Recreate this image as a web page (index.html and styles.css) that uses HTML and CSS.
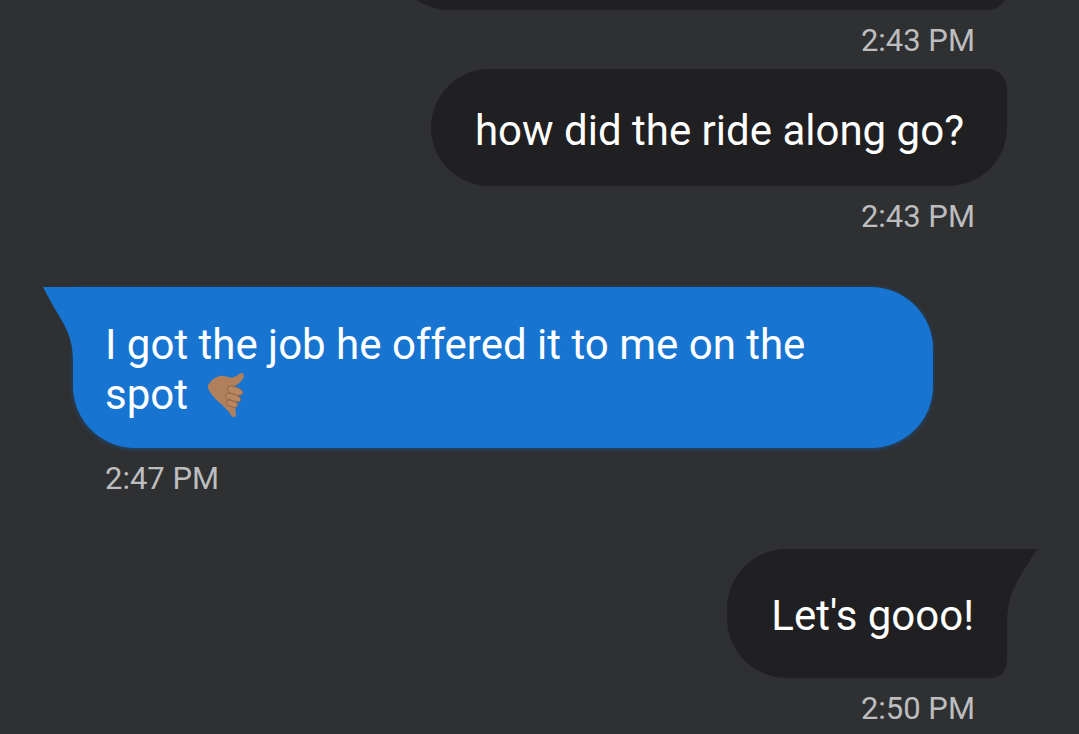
FILE: index.html
```
<!DOCTYPE html>
<html lang="en">
<head>
  <meta charset="UTF-8">
  <meta name="viewport" content="width=device-width, initial-scale=1.0">
  <title>Messages</title>
  <link rel="stylesheet" href="styles.css">
</head>
<body>

  <main class="thread">
    <!-- Older message, scrolled off the top -->
    <div class="message sent">
      <div class="bubble bubble-wide"></div>
      <time class="time">2:43 PM</time>
    </div>

    <div class="message sent">
      <div class="bubble bubble-last">how did the ride along go?</div>
      <time class="time">2:43 PM</time>
    </div>

    <div class="message received new-group">
      <div class="bubble">
        <svg class="tail" viewBox="0 0 31 76" aria-hidden="true">
          <path d="M0 0H31V76H30C30 58 27 48 19 34C14 25 7 14 0 0Z" fill="#1775d1"/>
        </svg>
        I got the job he offered it to me on the spot
        <svg class="emoji" viewBox="0 0 42 48" role="img" aria-label="Call me hand">
          <!-- palm, thumb and little finger -->
          <path d="M4 14C7 9 11 6 16 5C21 4 25 8 30 6C34 5 35 2 38 2C41 3 40 7 38 9C35 13 31 15 28 16L31 34L32 44C31 47 29 47 27 44C24 39 20 36 16 32C11 28 6 22 4 17Z" fill="#b07f5b"/>
          <!-- curled fingers -->
          <g fill="#b9865f" stroke="#8a674e" stroke-width="1">
            <path d="M23 30C25 27 34 31 34 34C33 37 29 37 26 35C23 34 22 32 23 30Z"/>
            <path d="M22 23C25 20 37 25 37 29C36 32 31 31 27 29C23 28 21 26 22 23Z"/>
            <path d="M24 16C28 13 39 18 39 22C38 25 33 25 29 23C25 22 22 19 24 16Z"/>
          </g>
        </svg>
      </div>
      <time class="time">2:47 PM</time>
    </div>

    <div class="message sent new-group">
      <div class="bubble bubble-first">
        <svg class="tail" viewBox="0 0 31 76" aria-hidden="true">
          <path d="M31 0H0V76H1C1 58 4 46 11 33C16 24 23 13 31 0Z" fill="#202022"/>
        </svg>
        Let's gooo!
      </div>
      <time class="time">2:50 PM</time>
    </div>
  </main>

</body>
</html>
```
FILE: styles.css
```
* {
  margin: 0;
  padding: 0;
  box-sizing: border-box;
}

body {
  background-color: #2f3032;
  color: #fff;
  font-family: Roboto, Arial, sans-serif;
}

/* Thread sticks to the newest message */
.thread {
  display: flex;
  flex-direction: column;
  justify-content: flex-end;
  gap: 9px;
  height: 100vh;
  padding: 0 72px 6px 73px;
  overflow: hidden;
}

.message {
  display: flex;
  flex-direction: column;
  flex-shrink: 0;
}

.new-group {
  margin-top: 42px;
}

.sent {
  align-items: flex-end;
}

.received {
  align-items: flex-start;
}

.bubble {
  position: relative;
  max-width: 860px;
  min-height: 117px;
  font-size: 42px;
  line-height: 50px;
}

.sent .bubble {
  padding: 37px 43px 30px 44px;
  background-color: #202022;
  border-radius: 60px 20px 20px 60px;
}

.sent .bubble-wide {
  width: 66%;
}

.sent .bubble-last {
  border-bottom-right-radius: 60px;
}

.sent .bubble-first {
  padding: 42px 33px 37px 44px;
  border-radius: 60px 0 16px 60px;
}

.received .bubble {
  padding: 33px 44px 28px 32px;
  background-color: #1775d1;
  border-radius: 0 62px 62px 62px;
  box-shadow: 0 1px 5px #1c4c7c;
}

/* Pointed corner beside the first bubble of a group */
.tail {
  position: absolute;
  top: 0;
  width: 31px;
  height: 76px;
}

.received .tail {
  left: -30px;
}

.sent .tail {
  right: -30px;
}

.emoji {
  width: 42px;
  height: 48px;
  margin-left: 6px;
  vertical-align: -10px;
}

.time {
  margin-top: 12px;
  padding: 0 32px;
  color: #bdbdbf;
  font-size: 31px;
  line-height: 38px;
}
```
